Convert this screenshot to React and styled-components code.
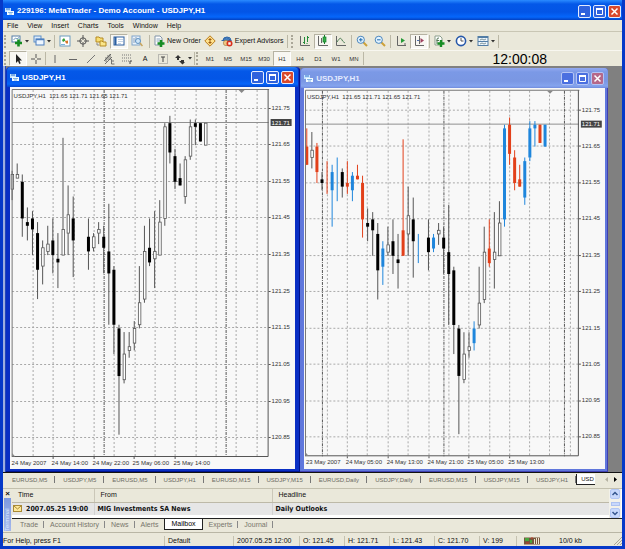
import styled, { createGlobalStyle, css } from "styled-components";

const GlobalStyle = createGlobalStyle`
	* {
		box-sizing: border-box;
	}
	body {
		margin: 0;
		font-family: "Liberation Sans", Arial, sans-serif;
		font-size: 7px;
		line-height: 10px;
		color: #111;
	}
	button {
		font: inherit;
		color: inherit;
		padding: 0;
		margin: 0;
		border: none;
		background: none;
	}
`;

const Frame = styled.div`
	height: 100vh;
	min-height: 400px;
	display: flex;
	flex-direction: column;
	padding: 0 3px 3px;
	background: #0639c8;
	overflow: hidden;
`;

const TitleBar = styled.header`
	flex: 0 0 20px;
	display: flex;
	align-items: center;
	gap: 3px;
	padding: 2px 1px 0 2px;
	color: white;
	background: linear-gradient(#2a8bff, #0458e8 20%, #0355e6 60%, #0566fb 85%, #0340c0);
`;

const Title = styled.h1`
	flex: 1;
	margin: 0;
	font-size: 8px;
	font-weight: bold;
	line-height: 12px;
	white-space: nowrap;
`;

const TitleButtons = styled.div`
	display: flex;
	gap: 2px;
`;

const TitleButton = styled.button`
	width: 13px;
	height: 13px;
	border: 1px solid ${(p) => (p.$dim ? "#b4c4f4" : "#e4ecff")};
	border-radius: 2px;
	background: ${(p) =>
		p.$close ? (p.$dim ? "#b5688a" : "#d9492c") : p.$dim ? "#4a6fe0" : "#2f62dd"};
	svg {
		display: block;
	}
`;

const MenuBar = styled.nav`
	flex: 0 0 11px;
	display: flex;
	align-items: center;
	gap: 9px;
	padding-left: 4px;
	background: #eae8da;
`;

const MenuItem = styled.button`
	line-height: 10px;
`;

const Toolbar = styled.div`
	flex: 0 0 ${(p) => p.$height}px;
	display: flex;
	align-items: center;
	background: #eae8da;
	border-top: 1px solid ${(p) => (p.$line ? "#c9c6b4" : "#f8f7f0")};
	overflow: hidden;
`;

const Grip = styled.div`
	flex: 0 0 2px;
	height: 13px;
	margin: 0 3px 0 1px;
	border-left: 2px dotted #aaa798;
`;

const Divider = styled.div`
	flex: 0 0 1px;
	height: 13px;
	margin: 0 ${(p) => p.$gap || 0}px;
	background: #bbb8a6;
`;

const ToolButton = styled.button`
	flex: none;
	min-width: ${(p) => (p.$drop ? 22 : 18)}px;
	height: 15px;
	display: flex;
	align-items: center;
	justify-content: center;
	gap: 2px;
	white-space: nowrap;
	${(p) =>
		p.$wide &&
		css`
			padding: 0 2px;
		`}
	${(p) =>
		p.$pressed &&
		css`
			background: #f8f7f2;
			border: 1px solid #b5b2a2;
			border-right-color: #fff;
			border-bottom-color: #fff;
		`}
`;

const PeriodButton = styled(ToolButton)`
	font-size: 6px;
	color: #333;
`;

const Clock = styled.time`
	margin-left: auto;
	padding-right: 75px;
	font-size: 14px;
	line-height: 14px;
	color: #000;
`;

const Workspace = styled.main`
	flex: 1;
	min-height: 0;
	display: flex;
	align-items: stretch;
	background: #808080;
	padding-right: 14px;
`;

const HiddenWindowEdge = styled.div`
	flex: 0 0 3px;
	background: #9daee0;
	border-right: 1px solid #2446b8;
`;

const ChartFrame = styled.section`
	flex: ${(p) => (p.$active ? 293 : 309)} 1 0;
	min-width: 0;
	margin-top: ${(p) => (p.$active ? 1 : 2)}px;
	display: flex;
	flex-direction: column;
	border-radius: 4px 4px 0 0;
	background: ${(p) => (p.$active ? "#0a2fc4" : "#6077dc")};
	padding: ${(p) => (p.$active ? "0 5px 3px 4px" : "0 3px 3px 4px")};
	box-shadow: inset ${(p) => (p.$active ? "-1px -1px #00138c" : "-1px -1px #4040b0")};
`;

const ChartTitle = styled.header`
	flex: 0 0 20px;
	display: flex;
	align-items: center;
	gap: 3px;
	margin: 0 -3px;
	padding: 1px 4px 0 3px;
	border-radius: 4px 4px 0 0;
	color: ${(p) => (p.$active ? "#fff" : "#e4ebff")};
	background: ${(p) =>
		p.$active
			? "linear-gradient(#2a80f8, #0458e8 20%, #0355e6 60%, #0566fb 85%, #0346cc)"
			: "linear-gradient(#93a9f0, #7b99e6 20%, #7a97e3 65%, #85a4ee 90%, #6f8bdc)"};
	h2 {
		flex: 1;
		margin: 0;
		font-size: 8px;
		line-height: 12px;
	}
`;

const ChartCanvas = styled.svg`
	flex: 1;
	display: block;
	width: 100%;
	min-height: 0;
	background: #f8f8f8;
	font-family: "Liberation Sans", Arial, sans-serif;
	font-size: 6px;
`;

const ChartTabs = styled.div`
	flex: 0 0 16px;
	display: flex;
	align-items: flex-start;
	border-top: 1px solid #111;
	background: #eae8da;
	padding: 1px 0 0 1px;
	font-size: 6px;
	color: #6b6a62;
	overflow: hidden;
`;

const ChartTab = styled.button`
	flex: none;
	height: 11px;
	padding: 0 8px;
	position: relative;
	&::after {
		content: "";
		position: absolute;
		right: 0;
		top: 2px;
		height: 7px;
		border-right: 1px solid #777;
	}
`;

const CurrentChartTab = styled.button`
	flex: none;
	height: 11px;
	padding: 0 1px 0 4px;
	background: #fff;
	color: #111;
	border-left: 1px solid #222;
	border-bottom: 1px solid #222;
`;

const TabArrows = styled.div`
	margin-left: auto;
	display: flex;
	gap: 6px;
	padding: 2px 4px 0 0;
	button {
		width: 4px;
		height: 7px;
	}
	svg {
		display: block;
	}
`;

const Terminal = styled.section`
	flex: 0 0 44px;
	display: grid;
	grid-template-columns: 9px 1fr;
	background: #eae8da;
	border-top: 1px solid #c3c0ae;
`;

const TerminalSide = styled.div`
	display: flex;
	flex-direction: column;
	align-items: center;
	button {
		height: 9px;
		font-size: 8px;
		font-weight: bold;
		line-height: 8px;
	}
	span {
		flex: 1;
		width: 7px;
		margin-bottom: 1px;
		background: linear-gradient(#a5b9ec, #7d99df);
		color: #dfe8ff;
		font-size: 6px;
		line-height: 7px;
		writing-mode: vertical-rl;
		transform: rotate(180deg);
	}
`;

const TerminalBody = styled.div`
	display: flex;
	flex-direction: column;
	min-width: 0;
`;

const MailArea = styled.div`
	flex: 0 0 30px;
	display: flex;
	background: #fff;
	border-bottom: 1px solid #222;
`;

const MailTable = styled.table`
	flex: 1;
	height: 26px;
	border-collapse: collapse;
	table-layout: fixed;
	th {
		height: 13px;
		padding: 0 0 0 6px;
		text-align: left;
		font-weight: normal;
		background: #eae8da;
		border-right: 1px solid #cbc7b8;
		border-bottom: 1px solid #bdb9a8;
	}
	td {
		height: 13px;
		padding: 0 0 0 3px;
		font-family: "DejaVu Sans Condensed", "Liberation Sans", sans-serif;
		font-weight: bold;
		background: #e6e6e6;
		border-right: 1px solid #d2d2d2;
		white-space: nowrap;
	}
	th:first-child {
		width: 82px;
	}
	th:nth-child(2) {
		width: 178px;
	}
	th:last-child,
	td:last-child {
		border-right: none;
	}
`;

const Mail = styled.span`
	display: flex;
	align-items: center;
	gap: 4px;
	margin-left: -2px;
`;

const ScrollBar = styled.div`
	flex: 0 0 12px;
	margin-right: 1px;
	display: flex;
	flex-direction: column;
	justify-content: space-between;
	align-items: center;
	background: #f2f1ea;
	button {
		width: 10px;
		height: 10px;
		border: 1px solid #b2c6f4;
		border-radius: 2px;
		background: #c8d8fc;
	}
	i {
		width: 9px;
		height: 4px;
		border: 1px solid #aec2f0;
		background: #c8d8fc;
	}
	svg {
		display: block;
	}
`;

const TerminalTabs = styled.div`
	display: flex;
	align-items: flex-start;
	padding-left: 2px;
	color: #77756b;
`;

const TerminalTab = styled.button`
	height: 11px;
	padding: 0 6px;
	position: relative;
	${(p) =>
		p.$active
			? css`
					background: #fff;
					color: #000;
					border: 1px solid #222;
					border-top: none;
				`
			: css`
					&::after {
						content: "";
						position: absolute;
						right: 0;
						top: 2px;
						height: 7px;
						border-right: ${p.$plain ? "none" : "1px solid #888"};
					}
				`}
`;

const StatusBar = styled.footer`
	flex: 0 0 14px;
	display: grid;
	grid-template-columns: 161px 69px 66px repeat(4, 45px) 37px 1fr;
	align-items: center;
	background: #eae8da;
	border-top: 1px solid #b9b6a5;
	padding-top: 2px;
`;

const StatusCell = styled.span`
	height: 10px;
	display: flex;
	align-items: center;
	padding-left: ${(p) => (p.$first ? 0 : 3)}px;
	border-left: ${(p) => (p.$first ? "none" : "1px solid #c5c2b1")};
	white-space: nowrap;
`;

const Traffic = styled(StatusCell)`
	gap: 19px;
	padding-left: 7px;
	> svg:last-child {
		margin-left: auto;
	}
`;

// prices in points above 120.00: [open, high, low, close, trade signal]
const shared = [
	[155, 157, 140, 145, "sell"],
	[144, 148, 139, 143],
	[145, 147, 135, 142],
	[141, 144, 123, 131],
	[132, 139, 127, 137, "buy"],
	[136, 143, 135, 138],
	[139, 145, 130, 135],
	[134, 141, 126, 133],
	[135, 167, 135, 142, "sell"],
	[141, 154, 135, 146],
	[145, 151, 129, 139],
	null,
	null,
	[140, 145, 131, 136],
	[137, 141, 136, 140, "buy"],
	[141, 144, 138, 142],
	[140, 143, 130, 137],
	[136, 149, 116, 130],
	[131, 132, 108, 116],
	[115, 116, 86, 102],
	[101, 114, 100, 108],
	[109, 114, 107, 110],
	[111, 117, 109, 115, "buy"],
	[116, 132, 115, 122],
	[123, 143, 122, 136],
	[137, 145, 132, 133, "sell"],
	[134, 147, 126, 136],
	[135, 150, 135, 144],
	[145, 171, 143, 170, "buy"],
	[171, 173, 160, 163, "sell"],
	[162, 164, 153, 155, "sell"],
	[156, 160, 154, 154, "sell"],
	[151, 162, 149, 161, "buy"],
	[162, 172, 161, 170, "buy"],
	[171, 172, 165, 170, "buy"],
	[171, 171, 166, 166, "sell"],
	[165, 171, 165, 171, "buy"],
];

const plainCandles = [[153, 158, 150, 157], [156, 160, 156, 157], ...shared];

const signalCandles = [
	[165, 170, 160, 160, "sell"],
	[162, 169, 159, 164],
	[165, 166, 155, 158, "sell"],
	[156, 158, 153, 155],
	[155, 161, 152, 155, "sell"],
	[158, 160, 143, 153, "buy"],
	[155, 162, 150, 155, "buy"],
	[158, 159, 151, 154],
	[155, 161, 152, 154, "sell"],
	[153, 158, 150, 157, "buy"],
	[157, 160, 156, 156, "sell"],
	...shared.slice(0, 11),
	[136, 141, 133, 136, "buy"],
	...shared.slice(12),
];

const charts = [
	{
		active: true,
		view: [10, 87, 284, 382],
		firstX: 11.5,
		topY: 108.5,
		unit: 3.665,
		axisX: 268,
		grid: [32, 52, 73, 93, 113, 134, 154, 174, 195, 215, 235, 256],
		days: [103, 225],
		marker: 241,
		dates: [
			[11, "24 May 2007"],
			[51, "24 May 14:00"],
			[92, "24 May 22:00"],
			[132, "25 May 06:00"],
			[173, "25 May 14:00"],
		],
		candles: plainCandles,
	},
	{
		active: false,
		view: [303, 88, 302, 381],
		firstX: 305.8,
		topY: 109.5,
		unit: 3.655,
		axisX: 579,
		grid: [326, 346, 366, 387, 407, 428, 448, 468, 489, 509, 529, 549, 570],
		days: [321, 443, 564],
		marker: 550,
		dates: [
			[305, "23 May 2007"],
			[345, "24 May 05:00"],
			[386, "24 May 13:00"],
			[427, "24 May 21:00"],
			[467, "25 May 05:00"],
			[508, "25 May 13:00"],
		],
		candles: signalCandles,
	},
];

const signalColor = { buy: "#1f86dc", sell: "#e2401a" };
const levels = [175, 165, 155, 145, 135, 125, 115, 105, 95, 85];

const Candle = ({ x, y, data, colored }) => {
	const [open, high, low, close, signal] = data;
	const color = colored && signal ? signalColor[signal] : null;
	const top = y(Math.max(open, close));
	const height = y(Math.min(open, close)) - top;
	const falling = close < open;
	return (
		<g>
			<path d={`M${x} ${y(high)}V${y(low)}`} stroke={color || "#555"} />
			{height > 0 && (
				<rect
					x={x - (color || falling ? 1.5 : 1)}
					y={top}
					width={color || falling ? 3 : 2.5}
					height={height}
					fill={color || (falling ? "#000" : "#fff")}
					stroke={color || falling ? "none" : "#555"}
					strokeWidth="0.8"
				/>
			)}
		</g>
	);
};

const Chart = ({ chart }) => {
	const { view, firstX, topY, unit, axisX, grid, days, marker, dates, candles } = chart;
	const left = view[0] + 1.5;
	const y = (p) => topY + (175 - p) * unit;
	const now = Math.round(y(171)) - 0.5;
	return (
		<ChartCanvas viewBox={view.join(" ")} role="img" aria-label="USDJPY,H1">
			{levels.map((p) => (
				<path
					key={p}
					d={`M${left} ${Math.round(y(p)) - 0.5}H${axisX}`}
					stroke="#a8a8a8"
					strokeDasharray="2 2"
				/>
			))}
			{grid.map((x) => (
				<path key={x} d={`M${x + 0.5} 90V457`} stroke="#a8a8a8" strokeDasharray="2 2" />
			))}
			{days.map((x) => (
				<path key={x} d={`M${x + 0.5} 90V457`} stroke="#555" strokeDasharray="3 1 1 1" />
			))}
			<path d={`M${left} ${now}H${axisX}`} stroke="#909090" />
			{candles.map(
				(c, i) =>
					c && (
						<Candle key={i} x={firstX + i * 5.09} y={y} data={c} colored={!chart.active} />
					),
			)}
			<path d={`M${left} 457V89.5H${axisX + 0.5}`} fill="none" stroke="#777" />
			<path d={`M${left} 456.5H${axisX - 0.5}V89.5`} fill="none" stroke="#555" />
			<path d={`M${marker - 3} 90h6l-3 3z`} fill="#888" />
			<path d={`M${left} 453l3 3.5h-3z`} fill="#888" />
			<text x={view[0] + 3} y="98" fill="#333" xmlSpace="preserve">
				{"USDJPY,H1  121.65 121.71 121.65 121.71"}
			</text>
			{levels.map((p) => (
				<g key={p}>
					<path d={`M${axisX} ${Math.round(y(p)) - 0.5}h2`} stroke="#555" />
					<text x={axisX + 3} y={Math.round(y(p)) + 1} fill="#333">
						{(120 + p / 100).toFixed(2)}
					</text>
				</g>
			))}
			<rect x={axisX + 2} y={now - 3.5} width="21" height="7" fill="#444" />
			<text x={axisX + 3} y={now + 2} fill="#fff">
				121.71
			</text>
			{dates.map(([x, label], i) => (
				<g key={label}>
					{i > 0 && <path d={`M${x + 1.5} 457v2`} stroke="#555" />}
					<text x={x} y="465" fill="#333">
						{label}
					</text>
				</g>
			))}
		</ChartCanvas>
	);
};

const icons = {
	newChart: (
		<>
			<rect x="1" y="1" width="8" height="6" fill="#fff" stroke="#567fa8" />
			<path d="M2.500 5l2-2 1.500 1L8 2.500" fill="none" stroke="#6b98b5" />
			<path d="M7.500 4.500v7M4 8h7" stroke="#158b20" strokeWidth="2.600" />
		</>
	),
	profiles: (
		<>
			<rect x="1" y="1" width="7" height="6" fill="#dcebfa" stroke="#5f8fc7" />
			<rect x="3" y="4" width="8" height="6" fill="#eef6ff" stroke="#4c7fbf" />
			<path d="M3 4.500h8" stroke="#4c7fbf" strokeWidth="1.500" />
		</>
	),
	market: (
		<>
			<rect x="1" y="1" width="10" height="10" fill="#fff" stroke="#6d9bc0" />
			<path d="M3 5l2-2 1.500 2.500L4 7z" fill="#35a03a" />
			<path d="M6 6l3-.5v3H7z" fill="#d8752a" />
			<path d="M2 9.500h4" stroke="#7bb4dd" />
		</>
	),
	target: (
		<>
			<circle cx="6" cy="6" r="3.200" fill="none" stroke="#555" />
			<path d="M6 0v5M6 7v5M0 6h5M7 6h5" stroke="#555" />
		</>
	),
	navigator: (
		<>
			<path d="M1 2h3l1 1h3v4H1z" fill="#f8df72" stroke="#b58a22" />
			<path d="M5 6h2l1 1h3v4H5z" fill="#fae68a" stroke="#b58a22" />
			<path d="M2 8v2h2" fill="none" stroke="#888" />
		</>
	),
	terminal: (
		<>
			<rect x="1" y="2" width="10" height="8" fill="#fff" stroke="#2a5fa0" />
			<path d="M2.500 2v8" stroke="#2a5fa0" strokeWidth="2" />
			<path d="M5 4.500h5M5 6.500h5M5 8.500h3" stroke="#a8bfd8" strokeWidth=".7" />
		</>
	),
	tester: (
		<>
			<rect x="1" y="1" width="8" height="9" fill="#eaf3fc" stroke="#80a4c9" />
			<path d="M3 3v5M5 2v5M7 4v4" stroke="#8ba0b7" />
			<circle cx="7" cy="6" r="2.500" fill="#cfe5f7" stroke="#5d91c2" />
			<path d="M9 8l2.500 3" stroke="#c8a45c" strokeWidth="1.500" />
		</>
	),
	newOrder: (
		<>
			<path d="M2 1h5l2 2v7H2z" fill="#fff" stroke="#8194a8" />
			<path d="M3.500 4h4M3.500 6h3" stroke="#8aa5bd" />
			<path d="M8 5v7M4.500 8.500h7" stroke="#168c22" strokeWidth="2.600" />
		</>
	),
	editor: (
		<>
			<path d="M6 .8L11.200 6 6 11.200 .8 6z" fill="#ffe28c" stroke="#b97a18" />
			<path d="M6 3v6M4.500 4.500h3M4.500 7.500h3" stroke="#a05c10" />
		</>
	),
	expert: (
		<>
			<path d="M2 5.500a4 3.500 0 018 0z" fill="#5e95d2" stroke="#2f67a8" />
			<path d="M2 5a4 4 0 0 1 7 0z" fill="#5e95d2" stroke="#2f67a8" />
			<path d="M.5 5.500h10" stroke="#2f67a8" />
			<circle cx="5" cy="8" r="2.700" fill="#efc681" stroke="#8c6b38" strokeWidth=".5" />
			<circle cx="8.500" cy="8.500" r="3" fill="#d8301c" />
			<rect x="7.300" y="7.300" width="2.400" height="2.400" fill="#fff" />
		</>
	),
	bars: (
		<>
			<path d="M1.500 1v9.500H11" fill="none" stroke="#666" />
			<path d="M5.500 2v7M4 7.500h1.500M8.500 1v6M8.500 2.500H10M8.500 8.500h-1" fill="none" stroke="#238c39" />
		</>
	),
	candles: (
		<>
			<path d="M1.500 1v9.500H11M4.500 3v5" fill="none" stroke="#666" />
			<path d="M7.500 0v9" stroke="#157e28" />
			<rect x="6" y="2" width="3" height="5" fill="#35ad49" stroke="#157e28" strokeWidth=".7" />
		</>
	),
	line: (
		<>
			<path d="M1.500 1v9.500H11" fill="none" stroke="#666" />
			<path d="M2 7c3-5 4-4 5-2s2 2 3 3" fill="none" stroke="#487b52" />
		</>
	),
	zoomIn: (
		<>
			<path d="M7 7l4 4" stroke="#cda13a" strokeWidth="2" />
			<circle cx="4.800" cy="4.800" r="3.600" fill="#e2f3ff" stroke="#4b86bd" />
			<path d="M3 4.800h3.600M4.800 3v3.600" stroke="#236daf" />
		</>
	),
	zoomOut: (
		<>
			<path d="M7 7l4 4" stroke="#cda13a" strokeWidth="2" />
			<circle cx="4.800" cy="4.800" r="3.600" fill="#e2f3ff" stroke="#4b86bd" />
			<path d="M3 4.800h3.600" stroke="#236daf" />
		</>
	),
	scroll: (
		<>
			<path d="M2.500 1v9.500H11M10 8v3" fill="none" stroke="#666" />
			<path d="M6 3l4 2.500L6 8z" fill="#259a37" />
		</>
	),
	shift: (
		<>
			<path d="M2.500 1v9.500H11M6.500 1v8" fill="none" stroke="#666" />
			<path d="M7.500 3L11 5.500 7.500 8z" fill="#a04460" />
			<path d="M4 5.500h2" stroke="#5070b0" />
		</>
	),
	indicators: (
		<>
			<path d="M2 1h5l2 2v7H2z" fill="#fff" stroke="#8b9e8c" />
			<path d="M4 9V4q0-1 2-1M3.500 5.500H6" fill="none" stroke="#517652" />
			<path d="M8 5v7M4.500 8.500h7" stroke="#168c22" strokeWidth="2.400" />
		</>
	),
	clock: (
		<>
			<circle cx="6" cy="6" r="4.600" fill="#fff" stroke="#2859aa" strokeWidth="1.600" />
			<path d="M6 3v3h2.500" fill="none" stroke="#555" />
		</>
	),
	template: (
		<>
			<rect x="1" y="1.500" width="10" height="9" fill="#edf6fc" stroke="#527da5" />
			<path d="M1 2.500h10M1 6.500h10" stroke="#527da5" />
			<path d="M3 5l2-1 2 1 2-1M3 9l2-1 2 1 2-1" fill="none" stroke="#637b83" strokeWidth=".8" />
		</>
	),
	cursor: <path d="M4 1v9l2-2 1.300 3 1.400-.7-1.300-2.800H10z" fill="#222" />,
	cross: <path d="M6 1v4M6 7v4M1 6h4M7 6h4" stroke="#555" />,
	vertical: <path d="M6 2v8" stroke="#666" />,
	horizontal: <path d="M2 6.500h8" stroke="#666" />,
	trend: <path d="M2 10l8-8" stroke="#777" />,
	channel: (
		<path d="M1 8l7-7M2 11l7-7M3 4v5M5 2v5M7 1v6M9 8h2M8.500 6v5h3" fill="none" stroke="#555" strokeWidth=".8" />
	),
	fibo: (
		<>
			<path d="M1 2h10M1 5h10M1 8h7" stroke="#777" strokeDasharray="1 1" />
			<path d="M9 11V8h2" fill="none" stroke="#444" />
		</>
	),
	label: (
		<>
			<rect x="1.500" y="1.500" width="9" height="9" fill="none" stroke="#888" strokeDasharray="1 1" />
			<path d="M4 4h4M6 4v5" stroke="#444" />
		</>
	),
	arrows: (
		<>
			<path d="M1 5l3-3 3 3H5v2H3V5z" fill="#333" />
			<path d="M5 8h2V7h3v2h1l-2.500 2.500L6 9z" fill="#333" />
		</>
	),
};

const Icon = ({ name }) => (
	<svg width="12" height="12" viewBox="0 0 12 12" aria-hidden="true">
		{icons[name]}
	</svg>
);

const DropArrow = () => (
	<svg width="4" height="3" viewBox="0 0 4 3">
		<path d="M0 0h4L2 2.500z" fill="#333" />
	</svg>
);

const Tool = ({ icon, pressed, drop }) => (
	<ToolButton $pressed={pressed} $drop={drop} aria-label={icon}>
		<Icon name={icon} />
		{drop && <DropArrow />}
	</ToolButton>
);

const AppIcon = () => (
	<svg width="9" height="9" viewBox="0 0 9 9">
		<path d="M0 1h6v4H0z" fill="#c5e4ff" />
		<path d="M1 2h4M3 5h5" stroke="#3475c9" />
		<path d="M2 4h7v4H2z" fill="#f3fbff" />
		<path d="M3 5.500h5M4 7h3" stroke="#63a2dd" strokeWidth=".8" />
	</svg>
);

const WindowButtons = ({ dim }) => (
	<TitleButtons>
		<TitleButton $dim={dim} aria-label="Minimize">
			<svg width="11" height="11">
				<path d="M2 8h4" stroke="#fff" strokeWidth="2" />
			</svg>
		</TitleButton>
		<TitleButton $dim={dim} aria-label="Maximize">
			<svg width="11" height="11">
				<path d="M2.500 3v5.500h6V3M2 3h7" fill="none" stroke="#fff" />
				<path d="M2 3h7" stroke="#fff" strokeWidth="2" />
			</svg>
		</TitleButton>
		<TitleButton $dim={dim} $close aria-label="Close">
			<svg width="11" height="11">
				<path d="M2.500 2.500l6 6M8.500 2.500l-6 6" stroke="#fff" strokeWidth="1.500" />
			</svg>
		</TitleButton>
	</TitleButtons>
);

const menus = ["File", "View", "Insert", "Charts", "Tools", "Window", "Help"];
const periods = ["M1", "M5", "M15", "M30", "H1", "H4", "D1", "W1", "MN"];
const chartTabs = [
	"EURUSD,M5",
	"USDJPY,M5",
	"EURUSD,M5",
	"USDJPY,H1",
	"EURUSD,M15",
	"USDJPY,M15",
	"EURUSD,Daily",
	"USDJPY,Daily",
	"EURUSD,M15",
	"USDJPY,M15",
	"USDJPY,H1",
];
const terminalTabs = ["Trade", "Account History", "News", "Alerts", "Mailbox", "Experts", "Journal"];
const quotes = ["Default", "2007.05.25 12:00", "O: 121.45", "H: 121.71", "L: 121.43", "C: 121.70", "V: 199"];

const App = () => (
	<>
		<GlobalStyle />
		<Frame>
			<TitleBar>
				<AppIcon />
				<Title>229196: MetaTrader - Demo Account - USDJPY,H1</Title>
				<WindowButtons />
			</TitleBar>
			<MenuBar>
				{menus.map((m) => (
					<MenuItem key={m}>{m}</MenuItem>
				))}
			</MenuBar>
			<Toolbar $height={19} $line>
				<Grip />
				<Tool icon="newChart" drop />
				<Tool icon="profiles" drop />
				<Divider $gap={1} />
				<Tool icon="market" />
				<Tool icon="target" />
				<Tool icon="navigator" />
				<Tool icon="terminal" pressed />
				<Tool icon="tester" />
				<Divider $gap={3} />
				<ToolButton>
					<Icon name="newOrder" />
					New Order
				</ToolButton>
				<Tool icon="editor" />
				<ToolButton $wide>
					<Icon name="expert" />
					Expert Advisors
				</ToolButton>
				<Divider $gap={2} />
				<Grip />
				<Tool icon="bars" />
				<Tool icon="candles" pressed />
				<Tool icon="line" />
				<Divider $gap={1} />
				<Tool icon="zoomIn" />
				<Tool icon="zoomOut" />
				<Divider $gap={1} />
				<Tool icon="scroll" />
				<Tool icon="shift" pressed />
				<Divider $gap={1} />
				<Tool icon="indicators" drop />
				<Tool icon="clock" drop />
				<Tool icon="template" drop />
				<Divider $gap={1} />
			</Toolbar>
			<Toolbar $height={16}>
				<Grip />
				<Tool icon="cursor" pressed />
				<Tool icon="cross" />
				<Divider />
				<Tool icon="vertical" />
				<Tool icon="horizontal" />
				<Tool icon="trend" />
				<Tool icon="channel" />
				<Tool icon="fibo" />
				<ToolButton>A</ToolButton>
				<Tool icon="label" />
				<Tool icon="arrows" drop />
				<Divider />
				<Grip />
				{periods.map((p) => (
					<PeriodButton key={p} $pressed={p === "H1"}>
						{p}
					</PeriodButton>
				))}
				<Divider />
				<Clock>12:00:08</Clock>
			</Toolbar>
			<Workspace>
				<HiddenWindowEdge />
				{charts.map((chart) => (
					<ChartFrame key={chart.firstX} $active={chart.active}>
						<ChartTitle $active={chart.active}>
							<AppIcon />
							<h2>USDJPY,H1</h2>
							<WindowButtons dim={!chart.active} />
						</ChartTitle>
						<Chart chart={chart} />
					</ChartFrame>
				))}
			</Workspace>
			<ChartTabs>
				{chartTabs.map((t, i) => (
					<ChartTab key={i}>{t}</ChartTab>
				))}
				<CurrentChartTab>USD</CurrentChartTab>
				<TabArrows>
					<button aria-label="Previous">
						<svg width="4" height="7">
							<path d="M4 1v5L1 3.500z" fill="#b5b2a2" />
						</svg>
					</button>
					<button aria-label="Next">
						<svg width="4" height="7">
							<path d="M0 1v5l3-2.500z" fill="#000" />
						</svg>
					</button>
				</TabArrows>
			</ChartTabs>
			<Terminal>
				<TerminalSide>
					<button aria-label="Close terminal">×</button>
					<span>Terminal</span>
				</TerminalSide>
				<TerminalBody>
					<MailArea>
						<MailTable>
							<thead>
								<tr>
									<th>Time</th>
									<th>From</th>
									<th>Headline</th>
								</tr>
							</thead>
							<tbody>
								<tr>
									<td>
										<Mail>
											<svg width="9" height="7">
												<rect x=".5" y=".5" width="8" height="6" fill="#ffe99a" stroke="#a98a35" />
												<path d="M1 1l3.500 3L8 1" fill="none" stroke="#a98a35" />
											</svg>
											2007.05.25 19:00
										</Mail>
									</td>
									<td>MIG Investments SA News</td>
									<td>Daily Outlooks</td>
								</tr>
							</tbody>
						</MailTable>
						<ScrollBar>
							<button aria-label="Up">
								<svg width="8" height="8">
									<path d="M1.500 5L4 2.500 6.500 5" fill="none" stroke="#35568f" strokeWidth="1.500" />
								</svg>
							</button>
							<i />
							<button aria-label="Down">
								<svg width="8" height="8">
									<path d="M1.500 3L4 5.500 6.500 3" fill="none" stroke="#35568f" strokeWidth="1.500" />
								</svg>
							</button>
						</ScrollBar>
					</MailArea>
					<TerminalTabs>
						{terminalTabs.map((t) => (
							<TerminalTab key={t} $active={t === "Mailbox"} $plain={t === "Alerts"}>
								{t}
							</TerminalTab>
						))}
					</TerminalTabs>
				</TerminalBody>
			</Terminal>
			<StatusBar>
				<StatusCell $first>For Help, press F1</StatusCell>
				{quotes.map((q) => (
					<StatusCell key={q}>{q}</StatusCell>
				))}
				<Traffic>
					<svg width="16" height="8">
						<path d="M0 .5h16v7H0z" fill="#76563b" />
						<path d="M1 1h4v3H1zM6 3h2v3H6z" fill="#49a63d" />
						<path d="M2 6h3M7 1h2" stroke="#c53b2a" />
						<path d="M10.500 2v5M12.500 1v6M14.500 1v6" stroke="#ece5d0" />
					</svg>
					10/0 kb
					<svg width="8" height="9">
						<path d="M0 9l8-8M3 9l5-5M6 9l2-2" stroke="#aaa797" />
					</svg>
				</Traffic>
			</StatusBar>
		</Frame>
	</>
);

export default App;
